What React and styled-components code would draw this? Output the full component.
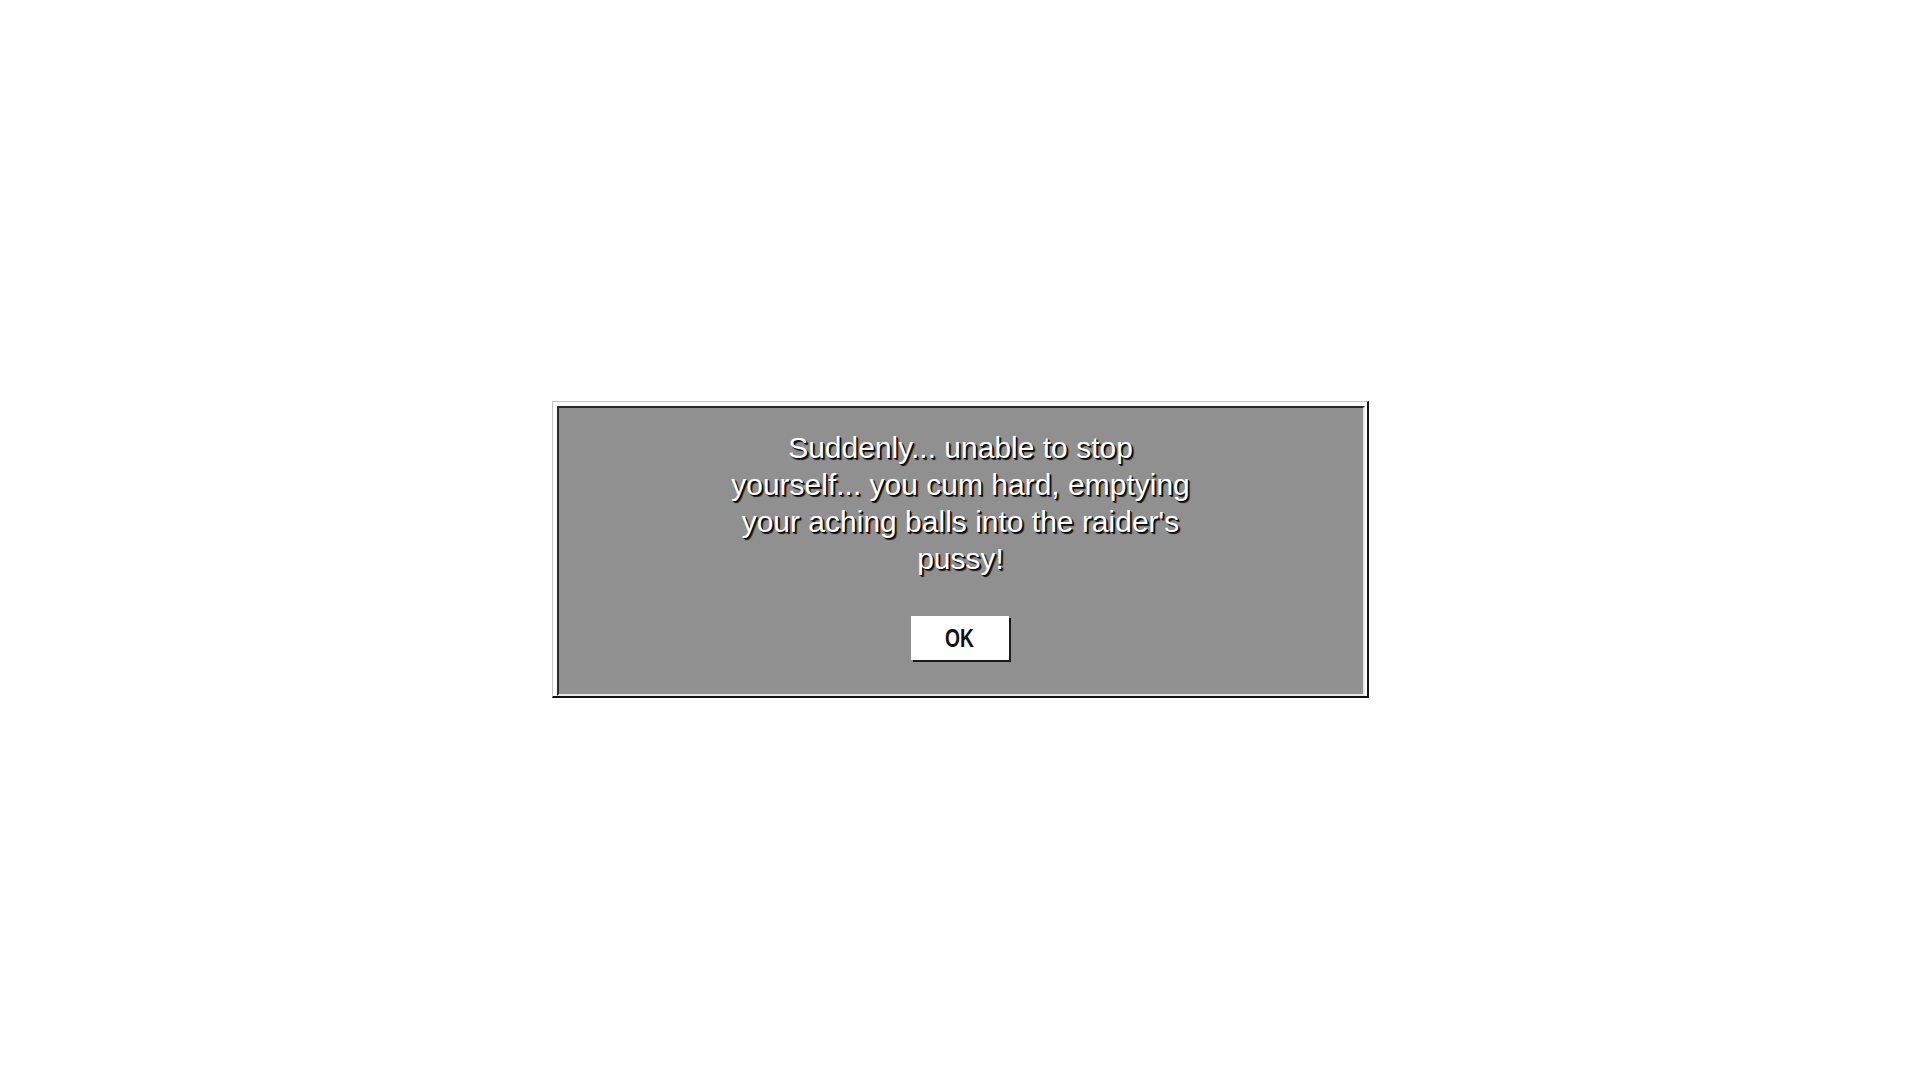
import styled, { createGlobalStyle } from 'styled-components';

const GlobalStyle = createGlobalStyle`
  html, body {
    margin: 0;
    padding: 0;
    background: #ffffff;
  }
  body {
    font-family: 'Liberation Sans', Arial, sans-serif;
  }
`;

const Page = styled.div`
  width: 100%;
  min-height: 100vh;
  display: flex;
  justify-content: center;
  align-items: flex-start;
  padding-top: 401px;
  box-sizing: border-box;
`;

const Frame = styled.div`
  width: 817px;
  box-sizing: border-box;
  background: #ffffff;
  border-top: 1px solid #c4c4c4;
  border-left: 1px solid #c4c4c4;
  border-right: 2px solid #111;
  border-bottom: 2px solid #111;
  padding: 4px 2px 0 4px;
`;

const Panel = styled.div`
  background: #909090;
  border-top: 2px solid #2a2a2a;
  border-left: 2px solid #2a2a2a;
  border-right: 2px solid #e6e6e6;
  border-bottom: 2px solid #e6e6e6;
  display: flex;
  flex-direction: column;
  align-items: center;
  padding: 21px 20px 34px;
`;

const Message = styled.p`
  margin: 0;
  width: 470px;
  text-align: center;
  color: #ffffff;
  font-family: 'Liberation Sans', Arial, sans-serif;
  font-size: 30px;
  line-height: 37px;
  text-shadow: 1px 1px 0 #000, 2px 2px 1px rgba(0, 0, 0, 0.85);
`;

const OkButton = styled.button`
  margin-top: 39px;
  margin-right: 2px;
  width: 98px;
  height: 44px;
  background: #ffffff;
  border: none;
  box-shadow: 2px 2px 0 #1a1a1a;
  display: flex;
  align-items: center;
  justify-content: center;
  cursor: pointer;
  padding: 0;
`;

/* the game uses a condensed face; squeeze Liberation Sans Bold to match */
const OkLabel = styled.span`
  display: inline-block;
  font-family: 'Liberation Sans', Arial, sans-serif;
  font-weight: 700;
  font-size: 26px;
  color: #111;
  transform: scaleX(0.74);
`;

export default function App() {
  return (
    <>
      <GlobalStyle />
      <Page>
        <Frame>
          <Panel>
            <Message>
              Suddenly... unable to stop yourself... you cum hard, emptying your aching balls into the raider's pussy!
            </Message>
            <OkButton>
              <OkLabel>OK</OkLabel>
            </OkButton>
          </Panel>
        </Frame>
      </Page>
    </>
  );
}
